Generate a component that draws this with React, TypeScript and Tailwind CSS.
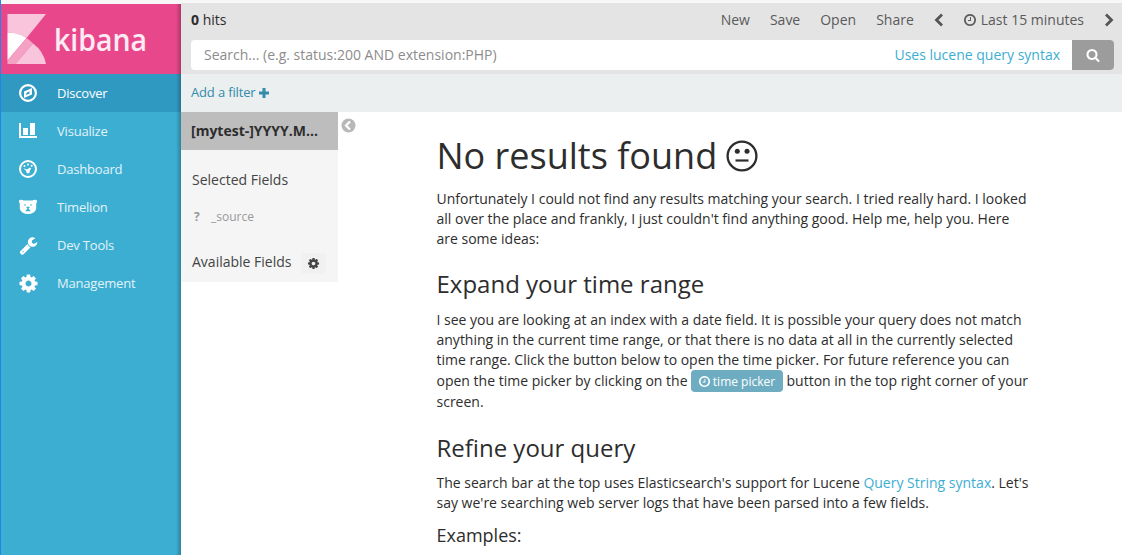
import type { ReactNode } from "react";

function Glyph({ d, size, className = "" }: { d: string; size: number; className?: string }) {
  return (
    <svg viewBox="0 0 1792 1792" width={size} height={size} fill="currentColor" className={className}>
      <path d={d} />
    </svg>
  );
}

const CLOCK =
  "M1024 544v448q0 14-9 23t-23 9h-320q-14 0-23-9t-9-23v-64q0-14 9-23t23-9h224v-352q0-14 9-23t23-9h64q14 0 23 9t9 23zm416 352q0-148-73-273t-198-198-273-73-273 73-198 198-73 273 73 273 198 198 273 73 273-73 198-198 73-273zm224 0q0 209-103 385.5t-279.5 279.5-385.5 103-385.5-103-279.5-279.5-103-385.5 103-385.5 279.5-279.5 385.5-103 385.5 103 279.5 279.5 103 385.5z";
const COG =
  "M1152 896q0-106-75-181t-181-75-181 75-75 181 75 181 181 75 181-75 75-181zm512-109v222q0 12-8 23t-20 13l-185 28q-19 54-39 91 35 50 107 138 10 12 10 25t-9 23q-27 37-99 108t-94 71q-12 0-26-9l-138-108q-44 23-91 38-16 136-29 186-7 28-36 28h-222q-14 0-24.5-8.5t-11.5-21.5l-28-184q-49-16-90-37l-141 107q-10 9-25 9-14 0-25-11-126-114-165-168-7-10-7-23 0-12 8-23 15-21 51-66.5t54-70.5q-27-50-41-99l-183-27q-13-2-21-12.5t-8-23.5v-222q0-12 8-23t19-13l186-28q14-46 39-92-40-57-107-138-10-12-10-24 0-10 9-23 26-36 98.5-107.5t94.5-71.5q13 0 26 10l138 107q44-23 91-38 16-136 29-186 7-28 36-28h222q14 0 24.5 8.5t11.5 21.5l28 184q49 16 90 37l142-107q9-9 24-9 13 0 25 10 129 119 165 170 7 8 7 22 0 12-8 23-15 21-51 66.5t-54 70.5q26 50 41 98l183 28q13 2 21 12.5t8 23.5z";
const WRENCH =
  "M448 1472q0-26-19-45t-45-19-45 19-19 45 19 45 45 19 45-19 19-45zm644-420l-682 682q-37 37-90 37-52 0-91-37l-106-108q-38-36-38-90 0-53 38-91l681-681q39 98 114.5 173.5t173.5 114.5zm634-435q0 39-23 106-47 134-164.5 217.5t-258.5 83.5q-185 0-316.5-131.5t-131.5-316.5 131.5-316.5 316.5-131.5q58 0 121.5 16.5t107.5 46.5q16 11 16 28t-16 28l-293 169v224l193 107q5-3 79-48.5t135.5-81 70.5-35.5q15 0 23.5 10t8.5 25z";
const SEARCH =
  "M1216 832q0-185-131.5-316.5t-316.5-131.5-316.5 131.5-131.5 316.5 131.5 316.5 316.5 131.5 316.5-131.5 131.5-316.5zm512 832q0 52-38 90t-90 38q-54 0-90-38l-343-342q-179 124-399 124-143 0-273.5-55.5t-225-150-150-225-55.5-273.5 55.5-273.5 150-225 225-150 273.5-55.5 273.5 55.5 225 150 150 225 55.5 273.5q0 220-124 399l343 343q37 37 37 90z";

function CompassIcon() {
  return (
    <svg width="18" height="18" viewBox="0 0 18 18">
      <circle cx="9" cy="9" r="7.9" fill="none" stroke="white" strokeWidth="2.200" />
      <path fillRule="evenodd" fill="white" d="M13 4v6.500L5 14V7.500ZM7.300 8.900v2.100l3.200-1.500V7.300Z" />
    </svg>
  );
}

function BarsIcon() {
  return (
    <svg width="18" height="18" viewBox="0 0 18 18" fill="white">
      <path d="M0 1h2v13h16v2H0ZM4 6h5v7H4ZM11 1h5v12h-5Z" />
    </svg>
  );
}

function GaugeIcon() {
  return (
    <svg width="18" height="18" viewBox="0 0 18 18">
      <circle cx="9" cy="9" r="8" fill="none" stroke="white" strokeWidth="2" />
      <g fill="white">
        <circle cx="5.500" cy="6" r="1.050" />
        <circle cx="9" cy="4.500" r="1.050" />
        <circle cx="12.700" cy="5.800" r="1.050" />
        <path d="M4.300 8.200 8 9.500 11 7.400l1.200 1.200-1.600 2.200q.7 1.500-.4 2.300-1.200.9-2.400-.1-.8-.8-.5-1.900Z" />
      </g>
    </svg>
  );
}

function BearIcon() {
  return (
    <svg width="18" height="18" viewBox="0 0 18 18">
      <path fill="white" d="M0 3.200Q0 1.800 1.800 1.800q2 0 2.800.7h8.800q.8-.7 2.800-.7Q18 1.800 18 3.200q0 1.400-.8 2.300v5q-.5 2.800-3 4.300-2.400 1.200-5.200 1.200t-5.200-1.200q-2.500-1.500-3-4.300v-5Q0 4.600 0 3.200Z" />
      <g fill="#3caed2">
        <circle cx="6" cy="7" r=".8" />
        <circle cx="12" cy="7" r=".8" />
        <path d="M7.500 8.800h3v1l-1 .8 2.300 2.600H6.200l2.300-2.600-1-.8Z" />
      </g>
    </svg>
  );
}

function KibanaLogo() {
  return (
    <svg width="180" height="70" viewBox="0 0 180 70">
      <path d="M6.500 10h38.500L25.500 34Q17 28.600 6.500 28.600Z" fill="#f9c5dc" />
      <path d="M6.500 28.600Q17 28.600 25.500 34L6.500 56.500Z" fill="white" />
      <path d="M25.500 34Q29 36 32 39.500L14.500 60H6.500V56.500Z" fill="#f4a1c4" />
      <path d="M32 39.500Q42.500 47 45 60H14.500Z" fill="#f9c5dc" />
      <text x="53" y="47" textLength="93" lengthAdjust="spacingAndGlyphs" fill="#fdeaf3" fontFamily="Open Sans, sans-serif" fontWeight="600" fontSize="31">
        kibana
      </text>
    </svg>
  );
}

const NAV: { label: string; icon: ReactNode }[] = [
  { label: "Discover", icon: <CompassIcon /> },
  { label: "Visualize", icon: <BarsIcon /> },
  { label: "Dashboard", icon: <GaugeIcon /> },
  { label: "Timelion", icon: <BearIcon /> },
  { label: "Dev Tools", icon: <Glyph d={WRENCH} size={19} /> },
  { label: "Management", icon: <Glyph d={COG} size={21} className="-ml-[1.5px]" /> },
];

function Sidebar() {
  return (
    <aside className="relative mt-[4px] flex w-[180px] shrink-0 flex-col bg-[#3caed2]">
      <div className="h-[70px] bg-[#e8488b]">
        <KibanaLogo />
      </div>
      {NAV.map((item, i) => (
        <div key={item.label} className={`flex h-[38px] items-center pl-[18px] text-[13px] tracking-[-0.2px] ${i === 0 ? "bg-[#3099c2] text-white" : "text-[#e2f3f8]"}`}>
          <span className="flex w-[38px] text-white">{item.icon}</span>
          <span className="pt-[2px]">{item.label}</span>
        </div>
      ))}
      <div className="absolute inset-y-0 right-0 w-[5px] bg-linear-to-r from-transparent to-black/25" />
    </aside>
  );
}

function Chevron({ right = false }: { right?: boolean }) {
  return (
    <svg width="10" height="14" viewBox="0 0 10 14" fill="none" stroke="#555" strokeWidth="2.800">
      <path d={right ? "M2 1.500 7.500 7 2 12.500" : "M8 1.500 2.500 7 8 12.500"} />
    </svg>
  );
}

function Header() {
  return (
    <header className="mt-[3px] h-[71px] bg-[#e4e4e4]">
      <div className="flex h-[37px] items-center pr-[8px] pb-[4px] pl-[10px] text-[14px] text-[#5a5a5a]">
        <span className="text-[#2d2d2d]"><b className="font-bold">0</b> hits</span>
        <nav className="ml-auto flex items-center">
          <span>New</span>
          <span className="ml-[20px]">Save</span>
          <span className="ml-[20px]">Open</span>
          <span className="ml-[20px]">Share</span>
          <span className="ml-[20px]"><Chevron /></span>
          <span className="ml-[19px] flex items-center gap-[4px]"><Glyph d={CLOCK} size={14} /> Last 15 minutes</span>
          <span className="ml-[20px]"><Chevron right /></span>
        </nav>
      </div>
      <div className="mr-[8px] ml-[10px] flex h-[30px] overflow-hidden rounded-[4px] bg-white text-[14px]">
        <span className="flex flex-1 items-center pb-[2px] pl-[13px] text-[#8c8c8c]">Search... (e.g. status:200 AND extension:PHP)</span>
        <span className="flex items-center pr-[12px] pb-[2px] text-[#3caed2]">Uses lucene query syntax</span>
        <button className="flex w-[42px] items-center justify-center bg-[#9c9c9c] text-white"><Glyph d={SEARCH} size={14} /></button>
      </div>
    </header>
  );
}

function Fields() {
  return (
    <div className="h-[170px] w-[157px] shrink-0 bg-[#f5f5f5] text-[14px] text-[#444]">
      <div className="flex h-[38px] items-center bg-[#bdbdbd] pb-[1px] pl-[10px] font-bold text-[#2d2d2d]">[mytest-]YYYY.M...</div>
      <div className="mt-[20px] pl-[11px] leading-[20px]">Selected Fields</div>
      <div className="mt-[17px] flex pl-[13px] text-[12px] leading-[20px] text-[#999]"><b className="w-[17px]">?</b>_source</div>
      <div className="mt-[23px] flex pl-[11px] leading-[24px]">
        Available Fields
        <span className="mt-[3px] ml-[10px] flex h-[21px] w-[25px] items-center justify-center rounded-[3px] bg-[#f1f1f1]"><Glyph d={COG} size={13} /></span>
      </div>
    </div>
  );
}

function Results() {
  return (
    <main className="w-[600px] text-[14px] leading-[20px] whitespace-nowrap text-[#2d2d2d]">
      <h1 className="mt-[24px] flex h-[40px] items-center text-[36px] leading-[40px]">
        No results found
        <svg width="32" height="32" viewBox="0 0 32 32" className="ml-[9px]">
          <circle cx="16" cy="16" r="14.400" fill="none" stroke="#2d2d2d" strokeWidth="2.300" />
          <circle cx="11.300" cy="11.300" r="2.500" fill="#2d2d2d" />
          <circle cx="21" cy="11.300" r="2.500" fill="#2d2d2d" />
          <path d="M9.500 20.500h13" stroke="#2d2d2d" strokeWidth="2.200" />
        </svg>
      </h1>
      <p className="mt-[13px]">
        Unfortunately I could not find any results matching your search. I tried really hard. I looked<br />
        all over the place and frankly, I just couldn't find anything good. Help me, help you. Here<br />
        are some ideas:
      </p>
      <h2 className="mt-[20px] text-[24px] leading-[30px]">Expand your time range</h2>
      <p className="mt-[11px]">
        I see you are looking at an index with a date field. It is possible your query does not match<br />
        anything in the current time range, or that there is no data at all in the currently selected<br />
        time range. Click the button below to open the time picker. For future reference you can
      </p>
      <p className="flex h-[22px] items-center">
        open the time picker by clicking on the
        <span className="mr-[4px] ml-[3px] flex h-[22px] w-[92px] items-center justify-center gap-[2px] rounded-[4px] bg-[#6eadc1] text-[12px] text-white"><Glyph d={CLOCK} size={13} /><span className="pt-[2px]">time picker</span></span>
        button in the top right corner of your
      </p>
      <p>screen.</p>
      <h2 className="mt-[21px] text-[24px] leading-[30px]">Refine your query</h2>
      <p className="mt-[10px]">
        The search bar at the top uses Elasticsearch's support for Lucene <a className="text-[#3caed2]">Query String syntax</a>. Let's<br />
        say we're searching web server logs that have been parsed into a few fields.
      </p>
      <h3 className="mt-[11px] text-[18px] leading-[22px]">Examples:</h3>
    </main>
  );
}

export default function App() {
  return (
    <div className="flex h-[555px] w-[1122px] overflow-hidden border-l border-[#1e88e5] bg-[#f7f7f7] font-['Open_Sans',sans-serif]">
      <Sidebar />
      <div className="flex min-w-0 flex-1 flex-col">
        <Header />
        <div className="flex h-[38px] shrink-0 items-center gap-[3px] bg-[#ebeff0] pl-[10px] text-[13px] tracking-[-0.15px] text-[#328caa]">
          Add a filter
          <svg width="10" height="10" viewBox="0 0 10 10" className="-mt-[1px]"><path d="M5 0v10M0 5h10" stroke="currentColor" strokeWidth="3" /></svg>
        </div>
        <div className="flex flex-1 items-start bg-white">
          <Fields />
          <svg width="15" height="15" viewBox="0 0 15 15" className="mt-[6px] ml-[3px] shrink-0">
            <circle cx="7.500" cy="7.500" r="7" fill="#b8b8b8" />
            <path d="M9 3.500 5 7.500l4 4" fill="none" stroke="white" strokeWidth="2.200" />
          </svg>
          <div className="ml-[80.5px] flex"><Results /></div>
        </div>
      </div>
    </div>
  );
}
